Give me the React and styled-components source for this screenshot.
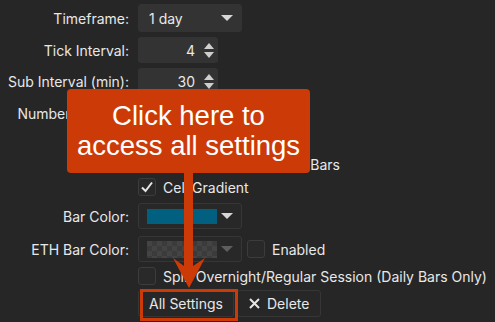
import React from 'react';
import styled, { createGlobalStyle } from 'styled-components';

const GlobalStyle = createGlobalStyle`
	body {
		margin: 0;
		background: #262626;
		font-family: Inter, "Noto Sans", sans-serif;
		font-size: 14px;
		color: #e8e8e8;
	}
`;

const Page = styled.div`
	position: relative;
	width: 495px;
	height: 322px;
	overflow: hidden;
	background: #262626;
`;

const Form = styled.div`
	display: flex;
	flex-direction: column;
	gap: 5px;
	padding-top: 4px;
`;

const Row = styled.div`
	display: flex;
	align-items: center;
	height: ${(p) => p.h}px;
`;

const Label = styled.div`
	width: 129px;
	text-align: right;
	white-space: nowrap;
	margin-right: 9px;
`;

const Field = styled.div`
	display: flex;
	align-items: center;
	gap: ${(p) => p.gap || 6}px;
	margin-left: ${(p) => (p.indent ? 138 : 0)}px;
`;

const Combo = styled.div`
	display: flex;
	align-items: center;
	justify-content: space-between;
	box-sizing: border-box;
	width: 104px;
	height: ${(p) => p.h || 26}px;
	padding: 0 8px 0 10px;
	border-radius: 3px;
	background: ${(p) => (p.filled ? '#333333' : '#282828')};
	border: 1px solid ${(p) => (p.filled ? '#333333' : '#363636')};
`;

const Swatch = styled.div`
	width: 70px;
	height: ${(p) => p.h || 15}px;
	margin-left: -2px;
	background: ${(p) => p.color};
	background-image: ${(p) =>
		p.checker
			? 'repeating-conic-gradient(#3b3b3b 0 25%, #444444 0 50%)'
			: 'none'};
	background-size: 10px 10px;
`;

const Caret = styled.span`
	width: 0;
	height: 0;
	border-left: 6px solid transparent;
	border-right: 6px solid transparent;
	border-top: 6px solid ${(p) => (p.dim ? '#5e5e5e' : '#d6d6d6')};
`;

const Spin = styled.div`
	display: flex;
	align-items: center;
	justify-content: flex-end;
	box-sizing: border-box;
	width: 80px;
	height: 26px;
	padding-right: 4px;
	border-radius: 3px;
	background: #333333;
`;

const SpinValue = styled.span`
	margin-right: 9px;
`;

const Arrows = styled.div`
	display: flex;
	flex-direction: column;
	gap: 3px;
`;

const Tri = styled.span`
	width: 0;
	height: 0;
	border-left: 5.5px solid transparent;
	border-right: 5.5px solid transparent;
	${(p) => (p.up ? 'border-bottom' : 'border-top')}: 6px solid #cfcfcf;
`;

const Box = styled.div`
	display: flex;
	align-items: center;
	justify-content: center;
	box-sizing: border-box;
	width: 18px;
	height: 18px;
	border: 1px solid #3c3c3c;
	border-radius: 3px;
	background: #292929;
`;

const Check = styled.label`
	display: flex;
	align-items: center;
	gap: 7px;
	white-space: nowrap;
`;

const Button = styled.div`
	display: flex;
	align-items: center;
	gap: 7px;
	box-sizing: border-box;
	height: 27px;
	padding: 0 ${(p) => p.pad || 10}px;
	border: 1px solid #363636;
	border-radius: 3px;
	background: #272727;
	white-space: nowrap;
`;

const Buttons = styled.div`
	display: flex;
	gap: 3px;
	margin-left: 138px;
`;

const Callout = styled.div`
	position: absolute;
	left: 67px;
	top: 89px;
	width: 243px;
	height: 84px;
	box-sizing: border-box;
	padding-top: 12px;
	border-radius: 4px;
	background: #cc3a08;
	color: #ffffff;
	font-family: "Liberation Sans", Arial, sans-serif;
	font-size: 27.5px;
	line-height: 30px;
	text-align: center;
`;

const Overlay = styled.svg`
	position: absolute;
	left: 0;
	top: 0;
	pointer-events: none;
`;

function Checkbox({ checked, children }) {
	return (
		<Check>
			<Box>
				{checked && (
					<svg width="14" height="14" viewBox="0 0 14 14">
						<path d="M2 7.5 L5.5 11 L12 2.5" fill="none" stroke="#e6e6e6" strokeWidth="2" />
					</svg>
				)}
			</Box>
			{children}
		</Check>
	);
}

function SpinBox({ value }) {
	return (
		<Spin>
			<SpinValue>{value}</SpinValue>
			<Arrows>
				<Tri up />
				<Tri />
			</Arrows>
		</Spin>
	);
}

export default function App() {
	return (
		<Page>
			<GlobalStyle />
			<Form>
				<Row h={28}>
					<Label>Timeframe:</Label>
					<Combo filled h={28}>
						<span>1 day</span>
						<Caret />
					</Combo>
				</Row>
				<Row h={26}>
					<Label>Tick Interval:</Label>
					<SpinBox value="4" />
				</Row>
				<Row h={26}>
					<Label>Sub Interval (min):</Label>
					<SpinBox value="30" />
				</Row>
				<Row h={28}>
					<Label>Number of Days:</Label>
					<SpinBox value="10" />
				</Row>
				<Row h={18}>
					<Field indent>
						<Checkbox>Show Labels</Checkbox>
					</Field>
				</Row>
				<Row h={18}>
					<Field indent>
						<Checkbox>Highlight Outside Day Bars</Checkbox>
					</Field>
				</Row>
				<Row h={18}>
					<Field indent>
						<Checkbox checked>Cell Gradient</Checkbox>
					</Field>
				</Row>
				<Row h={30}>
					<Label>Bar Color:</Label>
					<Combo>
						<Swatch color="#01607f" />
						<Caret />
					</Combo>
				</Row>
				<Row h={26}>
					<Label>ETH Bar Color:</Label>
					<Field gap={5}>
						<Combo>
							<Swatch checker h={17} />
							<Caret dim />
						</Combo>
						<Checkbox>Enabled</Checkbox>
					</Field>
				</Row>
				<Row h={18}>
					<Field indent>
						<Checkbox>Split Overnight/Regular Session (Daily Bars Only)</Checkbox>
					</Field>
				</Row>
				<Buttons>
					<Button>All Settings</Button>
					<Button pad={11}>
						<svg width="11" height="11" viewBox="0 0 11 11">
							<path d="M1 1 L10 10 M10 1 L1 10" stroke="#e6e6e6" strokeWidth="2" />
						</svg>
						Delete
					</Button>
				</Buttons>
			</Form>
			<Callout>
				Click here to
				<br />
				access all settings
			</Callout>
			<Overlay width="495" height="322" viewBox="0 0 495 322">
				<polygon
					points="184,172 193,172 193,266 205,258 189,288 173,258 184,266"
					fill="#cc3a08"
				/>
				<rect x="141.5" y="290.5" width="95" height="29" fill="none" stroke="#cc3a08" strokeWidth="3" />
			</Overlay>
		</Page>
	);
}
